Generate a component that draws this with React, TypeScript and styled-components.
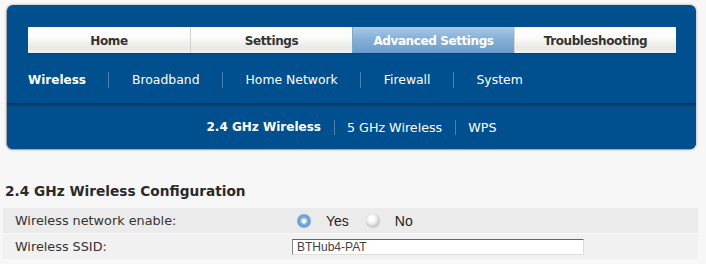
import styled, { createGlobalStyle } from 'styled-components';

const GlobalStyle = createGlobalStyle`
  html, body {
    margin: 0;
    padding: 0;
    background: #f7f7f7;
  }
  body {
    font-family: "DejaVu Sans", Verdana, sans-serif;
  }
`;

const Page = styled.div`
  width: 706px;
  height: 264px;
  overflow: hidden;
  padding: 5px 0 0 0;
  box-sizing: border-box;
`;

const Panel = styled.div`
  margin-left: 7px;
  width: 689px;
  border-radius: 6px;
  background: #00508f;
  box-shadow: 0 0 2px 1px rgba(0, 0, 0, 0.18), -1px 1px 1px rgba(0, 0, 0, 0.25);
  overflow: hidden;
`;

const TopArea = styled.div`
  height: 98px;
  padding: 22px 0 0 21px;
  box-sizing: border-box;
`;

const Tabs = styled.div`
  display: flex;
  width: 648px;
  height: 26px;
  box-shadow: 0 1px 0 rgba(0, 0, 0, 0.15);
`;

const Tab = styled.div<{ $active?: boolean }>`
  width: 162px;
  height: 26px;
  padding-top: 1px;
  display: flex;
  align-items: center;
  justify-content: center;
  box-sizing: border-box;
  font-family: "DejaVu Sans", sans-serif;
  font-weight: bold;
  font-size: 12px;
  letter-spacing: -0.4px;
  color: ${(p) => (p.$active ? '#ffffff' : '#333333')};
  background: ${(p) =>
    p.$active
      ? 'linear-gradient(#a9c9e6 0%, #86b0d8 45%, #6d9ccb 100%)'
      : 'linear-gradient(#ffffff 0%, #fbfbfa 40%, #e8e8e4 80%, #f2f2ef 100%)'};
  border-left: 1px solid ${(p) => (p.$active ? '#7ea6cf' : '#d4d4d0')};
  &:first-child {
    border-left: none;
  }
`;

const SubNav = styled.div`
  display: flex;
  align-items: center;
  margin-top: 19px;
  height: 16px;
`;

const SubItem = styled.div<{ $active?: boolean }>`
  font-size: ${(p) => (p.$active ? '12px' : '12.4px')};
  line-height: 16px;
  color: #ffffff;
  font-weight: ${(p) => (p.$active ? 'bold' : 'normal')};
  padding: 0 22px 0 23px;
  border-left: 1px solid #4f80b2;
  &:first-child {
    padding-left: 0;
    border-left: none;
  }
`;

const LowerBand = styled.div`
  height: 46px;
  display: flex;
  align-items: center;
  justify-content: center;
  padding-top: 2px;
  box-sizing: border-box;
  background: linear-gradient(#003463 0px, #0a4b85 4px, #00508f 8px, #00508f 100%);
`;

const ThirdItem = styled.div<{ $active?: boolean }>`
  font-size: ${(p) => (p.$active ? '12px' : '12.7px')};
  line-height: 15px;
  color: #ffffff;
  font-weight: ${(p) => (p.$active ? 'bold' : 'normal')};
  padding: 0 13px 0 12px;
  border-left: 1px solid #4f80b2;
  &:first-child {
    border-left: none;
    padding-left: 0;
  }
  &:last-child {
    padding-right: 0;
  }
`;

const Heading = styled.h2`
  margin: 34px 0 0 5px;
  font-size: 13.7px;
  line-height: 17px;
  font-weight: bold;
  color: #2a2a2a;
`;

const Form = styled.div`
  margin: 8px 0 0 3px;
  width: 695px;
  display: flex;
  flex-direction: column;
  gap: 1px;
`;

const Row = styled.div<{ $shade: string }>`
  height: 25px;
  display: flex;
  align-items: center;
  background: ${(p) => p.$shade};
`;

const Label = styled.div`
  width: 277px;
  padding-left: 12px;
  font-size: 12.8px;
  color: #333333;
`;

const Radio = styled.span<{ $on?: boolean }>`
  display: inline-block;
  width: 14px;
  height: 14px;
  border-radius: 50%;
  margin-left: 17px;
  background: ${(p) =>
    p.$on
      ? 'radial-gradient(circle at 50% 50%, #ffffff 0 2px, #8ab8de 3px, #5d9acf 6px, #a8cbe8 7px)'
      : 'radial-gradient(circle at 40% 35%, #ffffff 0 2px, #ececec 5px, #cfcfcf 7px)'};
  box-shadow: 0 0 1px rgba(0, 0, 0, 0.25);
  &:first-child {
    margin-left: 5px;
  }
`;

const RadioText = styled.span`
  margin-left: 15px;
  font-family: "Liberation Sans", Arial, sans-serif;
  font-size: 14px;
  color: #222222;
`;

const TextInput = styled.input`
  width: 292px;
  height: 16px;
  margin: 1px 0 0 0;
  box-sizing: border-box;
  padding: 0 4px;
  border: 1px solid #dddddd;
  border-top-color: #666666;
  border-left-color: #888888;
  background: #ffffff;
  font-family: "Liberation Sans", Arial, sans-serif;
  font-size: 12px;
  color: #444444;
  outline: none;
`;

const Field = styled.div`
  display: flex;
  align-items: center;
`;

export default function App() {
  return (
    <Page>
      <GlobalStyle />
      <Panel>
        <TopArea>
          <Tabs>
            <Tab>Home</Tab>
            <Tab>Settings</Tab>
            <Tab $active>Advanced Settings</Tab>
            <Tab>Troubleshooting</Tab>
          </Tabs>
          <SubNav>
            <SubItem $active>Wireless</SubItem>
            <SubItem>Broadband</SubItem>
            <SubItem>Home Network</SubItem>
            <SubItem>Firewall</SubItem>
            <SubItem>System</SubItem>
          </SubNav>
        </TopArea>
        <LowerBand>
          <ThirdItem $active>2.4 GHz Wireless</ThirdItem>
          <ThirdItem>5 GHz Wireless</ThirdItem>
          <ThirdItem>WPS</ThirdItem>
        </LowerBand>
      </Panel>
      <Heading>2.4 GHz Wireless Configuration</Heading>
      <Form>
        <Row $shade="#ebebeb">
          <Label>Wireless network enable:</Label>
          <Field>
            <Radio $on />
            <RadioText>Yes</RadioText>
            <Radio />
            <RadioText>No</RadioText>
          </Field>
        </Row>
        <Row $shade="#f1f1f1">
          <Label>Wireless SSID:</Label>
          <Field>
            <TextInput defaultValue="BTHub4-PAT" readOnly />
          </Field>
        </Row>
      </Form>
    </Page>
  );
}
